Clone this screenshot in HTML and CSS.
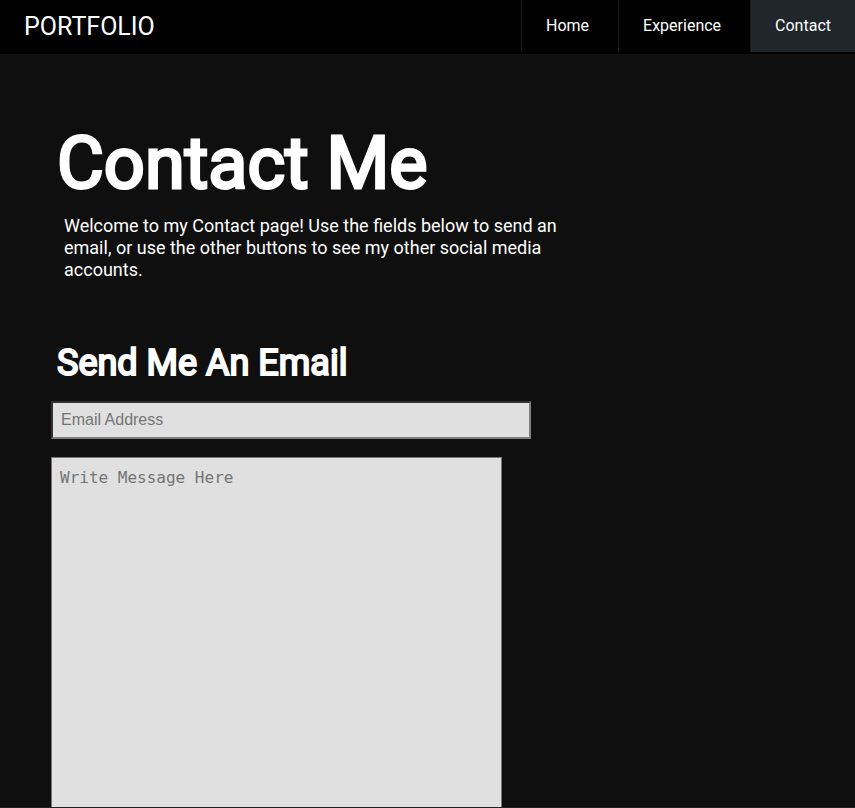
FILE: index.html
```
<!DOCTYPE html>
<html lang="en">
<head>
<meta charset="utf-8">
<title>Portfolio - Contact</title>
<link rel="stylesheet" href="styles.css">
</head>
<body>
<header class="topbar">
  <a class="brand" href="#">PORTFOLIO</a>
  <nav class="nav">
    <a class="nav-link" href="#">Home</a>
    <a class="nav-link" href="#">Experience</a>
    <a class="nav-link active" href="#" aria-current="page">Contact</a>
  </nav>
</header>
<main class="content">
  <h1 class="title">Contact Me</h1>
  <p class="intro">Welcome to my Contact page! Use the fields below to send an email, or use the other buttons to see my other social media accounts.</p>
  <h2 class="subtitle">Send Me An Email</h2>
  <form class="form">
    <input class="field email" type="email" placeholder="Email Address" aria-label="Email Address">
    <textarea class="field message" placeholder="Write Message Here" aria-label="Message"></textarea>
  </form>
</main>
</body>
</html>
```

FILE: styles.css
```
* {
  box-sizing: border-box;
}

html {
  height: 100%;
}

body {
  display: flex;
  flex-direction: column;
  height: 100%;
  margin: 0;
  border-bottom: 1px solid #222;
  background: #0f0f0f;
  color: #fff;
  font-family: Roboto, sans-serif;
  overflow: hidden;
}

.topbar {
  display: flex;
  flex: none;
  justify-content: space-between;
  background: #000;
  border-bottom: 2px solid #000;
}

.brand {
  padding: 12px 24px 10px;
  color: #fff;
  font-size: 25px;
  line-height: 30px;
  text-decoration: none;
}

.nav {
  display: flex;
}

.nav-link {
  padding: 0 29px 0 24px;
  border-left: 1px solid #1a1a1a;
  color: #fff;
  font-size: 16px;
  line-height: 52px;
  text-decoration: none;
}

.active {
  padding: 0 24px;
  background: #1f272a;
}

.content {
  display: flex;
  flex: 1;
  flex-direction: column;
  min-height: 0;
  padding: 66px 51px 0;
}

.title {
  margin: 0 6px;
  font-size: 72px;
  font-weight: 400;
  line-height: 88px;
  -webkit-text-stroke: 3px #fff;
}

.intro {
  max-width: 500px;
  margin: 7px 13px 0;
  font-size: 18px;
  line-height: 22px;
}

.subtitle {
  margin: 60px 6px 16px;
  font-size: 36px;
  font-weight: 400;
  line-height: 44px;
  -webkit-text-stroke: 2px #fff;
}

.form {
  display: flex;
  flex: 1;
  flex-direction: column;
  gap: 18px;
}

.field {
  width: 100%;
  margin: 0;
  padding: 8px;
  border: 1px solid #767676;
  border-radius: 0;
  background: #e0e0e0;
  color: #111;
  font-size: 16px;
}

.email {
  max-width: 480px;
  height: 38px;
  border: 2px solid #808080;
  border-top-color: #333;
  border-left-color: #333;
  font-family: "Liberation Sans", sans-serif;
}

.message {
  flex: 1;
  max-width: 451px;
  padding: 10px 8px;
  border-bottom: 0;
  font-family: "DejaVu Sans Mono", monospace;
  resize: none;
}
```
